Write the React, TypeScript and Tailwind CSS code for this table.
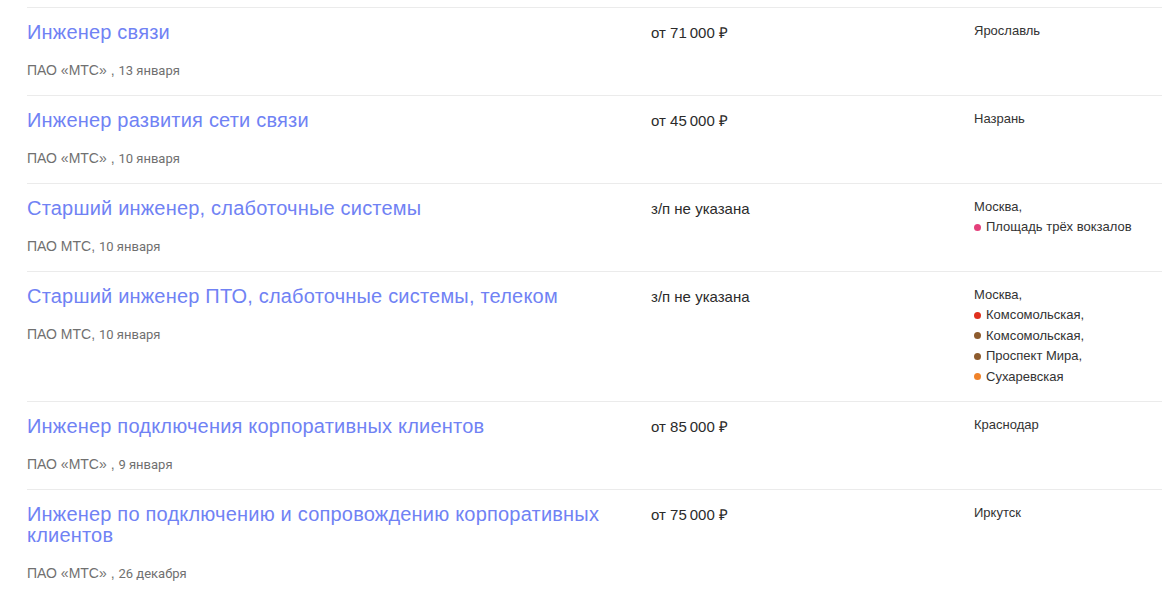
type Station = { name: string; color: string };

type Vacancy = {
  title: string;
  company: string;
  date: string;
  salary: string;
  city: string;
  stations?: Station[];
};

const vacancies: Vacancy[] = [
  {
    title: "Инженер связи",
    company: "ПАО «МТС» ",
    date: "13 января",
    salary: "от 71\u2009000 ₽",
    city: "Ярославль",
  },
  {
    title: "Инженер развития сети связи",
    company: "ПАО «МТС» ",
    date: "10 января",
    salary: "от 45\u2009000 ₽",
    city: "Назрань",
  },
  {
    title: "Старший инженер, слаботочные системы",
    company: "ПАО МТС",
    date: "10 января",
    salary: "з/п не указана",
    city: "Москва,",
    stations: [{ name: "Площадь трёх вокзалов", color: "#e4407b" }],
  },
  {
    title: "Старший инженер ПТО, слаботочные системы, телеком",
    company: "ПАО МТС",
    date: "10 января",
    salary: "з/п не указана",
    city: "Москва,",
    stations: [
      { name: "Комсомольская,", color: "#e0301e" },
      { name: "Комсомольская,", color: "#8d5b2d" },
      { name: "Проспект Мира,", color: "#8d5b2d" },
      { name: "Сухаревская", color: "#f0832a" },
    ],
  },
  {
    title: "Инженер подключения корпоративных клиентов",
    company: "ПАО «МТС» ",
    date: "9 января",
    salary: "от 85\u2009000 ₽",
    city: "Краснодар",
  },
  {
    title: "Инженер по подключению и сопровождению корпоративных клиентов",
    company: "ПАО «МТС» ",
    date: "26 декабря",
    salary: "от 75\u2009000 ₽",
    city: "Иркутск",
  },
];

function VacancyRow({ v }: { v: Vacancy }) {
  return (
    <div className="grid grid-cols-[624px_323px_1fr] border-t border-[#ebebeb] pt-[14px] pb-[14px]">
      <div className="pr-4">
        <a className="block text-[20px] leading-[21px] tracking-[0.2px] text-[#7082f4] cursor-pointer">
          {v.title}
        </a>
        <div className="mt-[17px] text-[14px] leading-5 text-[#707070]">
          {v.company},{" "}
          <span className="font-['Liberation_Sans_Narrow','Roboto',sans-serif] text-[13px]">
            {v.date}
          </span>
        </div>
      </div>
      <div className="pt-px text-[15px] leading-5 text-[#2b2b2b]">
        {v.salary}
      </div>
      <div className="-mt-px text-[13px] leading-5 text-[#333]">
        <div>{v.city}</div>
        {v.stations?.map((s, i) => (
          <div key={i} className="flex items-center gap-[5px] leading-[20.5px]">
            <span
              className="inline-block h-[7px] w-[7px] rounded-full"
              style={{ backgroundColor: s.color }}
            />
            <span>{s.name}</span>
          </div>
        ))}
      </div>
    </div>
  );
}

export default function App() {
  return (
    <div className="h-[596px] overflow-hidden bg-white font-['Liberation_Sans',Arial,sans-serif]">
      <div className="pl-[27px] pt-[7px]">
        {vacancies.map((v, i) => (
          <VacancyRow key={i} v={v} />
        ))}
      </div>
    </div>
  );
}
